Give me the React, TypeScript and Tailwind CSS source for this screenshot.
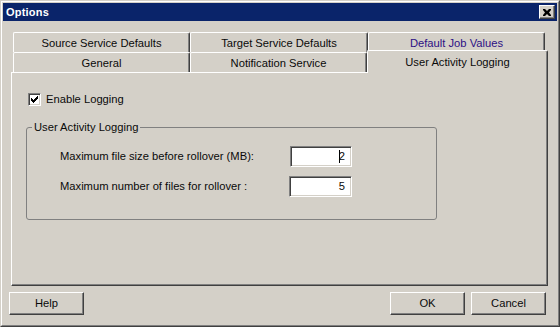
import React from "react";

const raised =
  "border border-t-white border-l-white border-r-[#404040] border-b-[#404040] shadow-[inset_-1px_-1px_0_#808080]";

function Tab({ label, w, cls = "" }: { label: string; w: string; cls?: string }) {
  return (
    <div
      className={`${w} h-[20px] flex items-center justify-center pt-px border-t border-l border-t-white border-l-white border-r border-r-[#404040] shadow-[inset_-1px_0_0_#808080] rounded-tl-[2px] rounded-tr-[2px] ${cls}`}
    >
      {label}
    </div>
  );
}

function Input({ value, caret, cls = "" }: { value: string; caret?: boolean; cls?: string }) {
  return (
    <div
      className={`h-[21px] bg-white border border-t-[#808080] border-l-[#808080] border-r-white border-b-white shadow-[inset_1px_1px_0_#404040,inset_-1px_-1px_0_#d4d0c8] flex items-center justify-end pr-[6px] ${cls}`}
    >
      {caret && <span className="w-px h-[13px] bg-black mr-[-1px]" />}
      <span className="leading-none">{value}</span>
    </div>
  );
}

function Button({ label }: { label: string }) {
  return (
    <div className={`w-[75px] h-[23px] flex items-center justify-center ${raised}`}>{label}</div>
  );
}

export default function App() {
  return (
    <div className="w-[560px] h-[327px] bg-[#d4d0c8] border border-t-[#d4d0c8] border-l-[#d4d0c8] border-r-[#404040] border-b-[#404040] font-['Liberation_Sans',sans-serif] text-[11.2px] text-[#0a0a0a]">
      <div className="h-full border border-t-white border-l-white border-r-[#808080] border-b-[#808080] p-px flex flex-col">
        {/* Title bar */}
        <div className="h-[18px] bg-[#0a246a] flex items-start justify-between">
          <span className="text-white font-bold text-[11px] pl-[3px] leading-[18px] tracking-[0.2px]">Options</span>
          <div className={`mt-[2px] mr-[2px] w-[16px] h-[14px] bg-[#d4d0c8] flex items-center justify-center ${raised}`}>
            <svg width="8" height="7" viewBox="0 0 8 7">
              <path d="M0 0h2l2 2 2-2h2v1L6 3.5 8 6v1H6L4 5 2 7H0V6l2-2.5L0 1z" fill="#000" />
            </svg>
          </div>
        </div>

        {/* Tabs */}
        <div className="mt-[11px] ml-[10px] flex">
          <Tab label="Source Service Defaults" w="w-[177px]" />
          <Tab label="Target Service Defaults" w="w-[178px]" />
          <Tab label="Default Job Values" w="w-[177px]" cls="text-[#2c0f84]" />
        </div>
        <div className="ml-[10px] h-[20px] flex items-end relative z-10">
          <Tab label="General" w="w-[177px]" />
          <Tab label="Notification Service" w="w-[177px]" />
          <div className="w-[181px] h-[23px] -mb-px bg-[#d4d0c8] flex items-start justify-center pt-[3px] border-t border-l border-t-white border-l-white border-r border-r-[#404040] shadow-[inset_-1px_0_0_#808080] rounded-tl-[2px] rounded-tr-[2px]">
            User Activity Logging
          </div>
        </div>

        {/* Panel */}
        <div className="ml-[8px] mr-[9px] h-[214px] border border-t-white border-l-white border-r-[#404040] border-b-[#404040] shadow-[inset_-1px_-1px_0_#808080] pt-[20px] pl-[14px]">
          <div className="flex items-center ml-[2px] h-[13px]">
            <div className="w-[13px] h-[13px] bg-white border border-t-[#808080] border-l-[#808080] border-r-white border-b-white shadow-[inset_1px_1px_0_#404040,inset_-1px_-1px_0_#d4d0c8] flex items-center justify-center">
              <svg width="7" height="7" viewBox="0 0 7 7">
                <path d="M0 2h1v1h1v1h1V3h1V2h1V1h1V0h1v3H6v1H5v1H4v1H3v1H2V6H1V5H0z" fill="#000" />
              </svg>
            </div>
            <span className="ml-[5px]">Enable Logging</span>
          </div>

          <div className="relative mt-[21px] w-[411px] h-[93px] border border-[#808080] rounded-[3px] pt-[18px] pl-[33px]">
            <span className="absolute -top-[7px] left-[5px] px-[2px] bg-[#d4d0c8] leading-[13px]">User Activity Logging</span>
            <div className="flex items-center h-[21px]">
              <span className="w-[230px]">Maximum file size before rollover (MB):</span>
              <Input value="2" caret cls="w-[62px]" />
            </div>
            <div className="flex items-center h-[21px] mt-[9px]">
              <span className="w-[229px]">Maximum number of files for rollover :</span>
              <Input value="5" cls="w-[63px]" />
            </div>
          </div>
        </div>

        {/* Buttons */}
        <div className="mt-[6px] ml-[6px] mr-[11px] flex">
          <Button label="Help" />
          <div className="flex-1" />
          <Button label="OK" />
          <div className="w-[6px]" />
          <Button label="Cancel" />
        </div>
      </div>
    </div>
  );
}
